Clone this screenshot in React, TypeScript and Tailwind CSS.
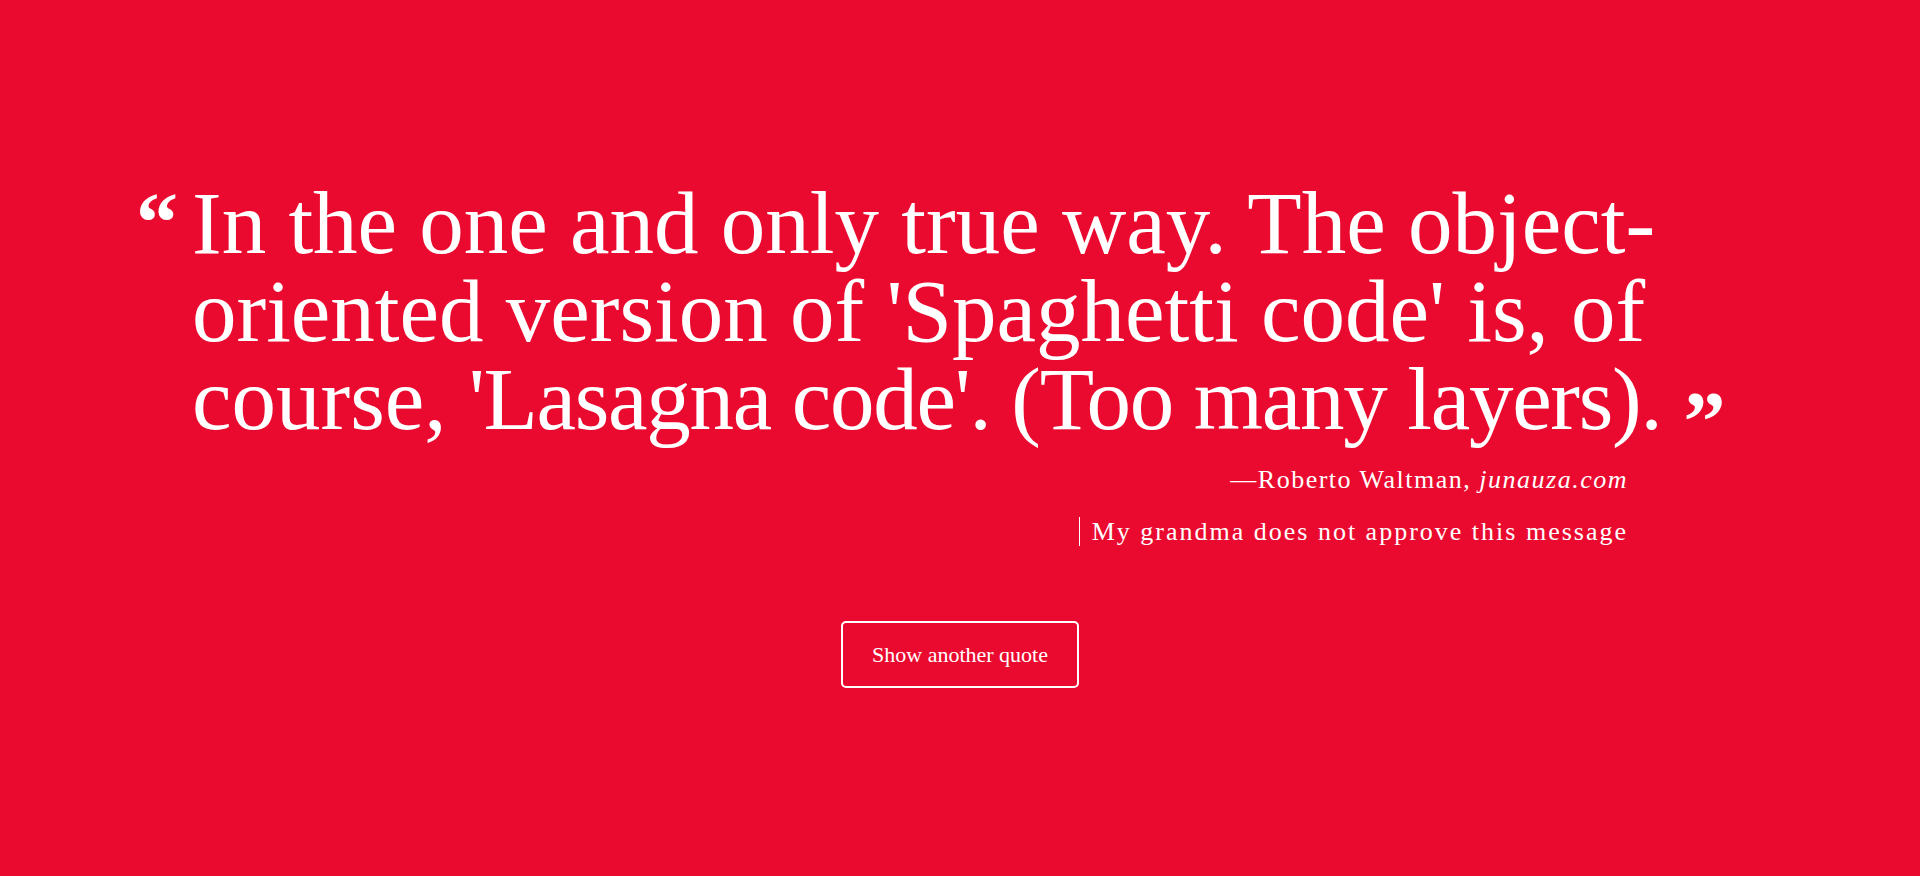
import React from "react";

export default function App() {
  return (
    <div className="min-h-screen bg-[#eb0a2f] text-white font-['Liberation_Serif',serif]">
      <div className="mx-auto w-[1536px] pt-[179px]">
        {/* Quote */}
        <blockquote className="relative w-[1600px] text-[89px] leading-[88px]">
          <span className="absolute left-[-56px] top-[2px] text-[84px] leading-none font-bold">
            &ldquo;
          </span>
          In the one and only true way. The object-oriented version of
          'Spaghetti code' is, of course,{" "}
          <span className="tracking-[-1.3px]">
            'Lasagna code'. (Too many layers).
          </span>{" "}
          <span className="relative top-[21px] text-[84px] leading-none font-bold">
            &rdquo;
          </span>
        </blockquote>

        {/* Author */}
        <div className="mt-[18px] pr-[100px] text-right text-[26px] leading-[37px]">
          <p className="tracking-[1.5px]">
            &mdash;Roberto Waltman, <em>junauza.com</em>
          </p>
          <p className="mt-[15px] tracking-[2px]">
            <span className="border-l border-white pl-[12px]">
              My grandma does not approve this message
            </span>
          </p>
        </div>

        <div className="mt-[71px] flex justify-center">
          <button className="w-[238px] h-[67px] rounded-[5px] border-2 border-white text-[22px]">
            Show another quote
          </button>
        </div>
      </div>
    </div>
  );
}
